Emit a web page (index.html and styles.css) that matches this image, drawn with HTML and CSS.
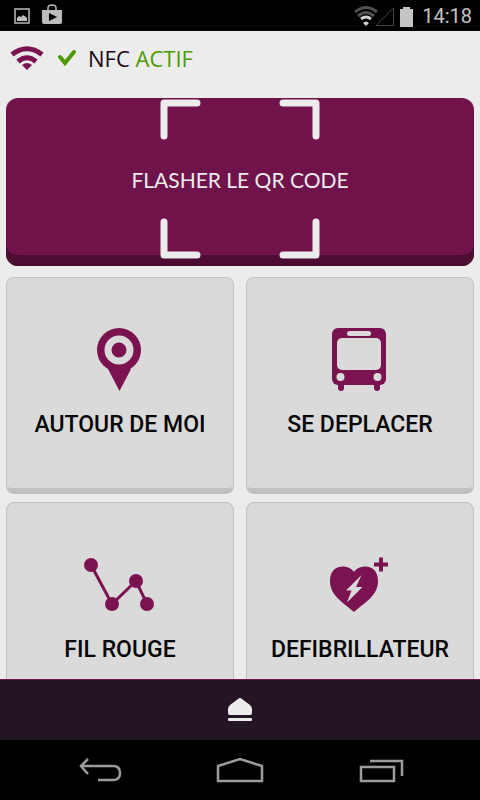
FILE: index.html
```html
<!DOCTYPE html>
<html lang="fr">
<head>
    <meta charset="UTF-8">
    <meta name="viewport" content="width=device-width, initial-scale=1.0">
    <title>NFC Actif</title>
    <link rel="stylesheet" href="styles.css">
</head>
<body>
    <div class="status-bar">
        <svg class="status-left" width="50" height="24" viewBox="0 0 50 24" aria-hidden="true">
            <rect x="1" y="5" width="14" height="14" fill="none" stroke="#bdbdbd" stroke-width="1.5"/>
            <path d="M3 17v-3l2-2 2 1 2-2 3 2 1 1v3z" fill="#bdbdbd"/>
            <path d="M28 6h20v12q0 2-2 2H30q-2 0-2-2z" fill="#bdbdbd"/>
            <path d="M34 6V4q0-3 4-3t4 3v2" fill="none" stroke="#bdbdbd" stroke-width="1.5"/>
            <path d="M35 9v8l8-4z" fill="#000"/>
        </svg>
        <div class="status-right">
            <svg width="60" height="24" viewBox="0 0 60 24" aria-hidden="true">
                <g fill="none" stroke="#505050" stroke-width="3">
                    <path d="M1 8Q12 -1 23 8"/>
                    <path d="M4 12Q12 5 20 12"/>
                </g>
                <path d="M7 15Q12 11 17 15" fill="none" stroke="#d0d0d0" stroke-width="3"/>
                <path d="M9 19q3-3 6 0l-3 3z" fill="#d0d0d0"/>
                <path d="M39.500 4v17.500H22z" fill="none" stroke="#444"/>
                <path d="M46 5h3V3h7v2h3v18H46z" fill="#c4c4c4"/>
            </svg>
            <span class="clock">14:18</span>
        </div>
    </div>

    <header class="nfc-header">
        <svg width="34" height="24" viewBox="0 0 34 24" aria-hidden="true">
            <g fill="none" stroke="#7a1350" stroke-width="5">
                <path d="M2 8.500Q17 -3 32 8.500"/>
                <path d="M8 15.500Q17 8 26 15.500"/>
            </g>
            <path d="M12 19q5-4 10 0l-5 5z" fill="#7a1350"/>
        </svg>
        <svg class="check" width="18" height="16" viewBox="0 0 18 16" aria-hidden="true">
            <path d="M2 7l5 6 9-11" fill="none" stroke="#4c9a00" stroke-width="4" stroke-linecap="round"/>
        </svg>
        <h1>NFC <span class="active">ACTIF</span></h1>
    </header>

    <main>
        <button class="qr-button" type="button">
            <svg class="qr-frame" width="160" height="160" viewBox="0 0 160 160" aria-hidden="true">
                <path d="M37 4H4V37M123 4H156V37M4 123V156H37M156 123V156H123" fill="none" stroke="#ececec" stroke-width="7" stroke-linecap="round" stroke-linejoin="round"/>
            </svg>
            <span class="qr-label">FLASHER LE QR CODE</span>
        </button>

        <div class="tiles">
            <button class="tile" type="button">
                <svg width="80" height="64" viewBox="0 0 80 64" aria-hidden="true">
                    <path d="M28 41L39.500 63 51 41z" fill="#7a1350"/>
                    <circle cx="39" cy="22" r="22" fill="#7a1350"/>
                    <circle cx="39" cy="22" r="11" fill="none" stroke="#dadada" stroke-width="7"/>
                </svg>
                <span>AUTOUR DE MOI</span>
            </button>
            <button class="tile" type="button">
                <svg width="80" height="64" viewBox="0 0 80 64" aria-hidden="true">
                    <g fill="#7a1350">
                        <rect x="12" y="0" width="54" height="57" rx="6"/>
                        <rect x="18" y="50" width="6" height="13" rx="3"/>
                        <rect x="54" y="50" width="6" height="13" rx="3"/>
                    </g>
                    <g fill="#dadada">
                        <rect x="27" y="3" width="24" height="5" rx="2.500"/>
                        <rect x="17" y="10" width="44" height="32" rx="5"/>
                        <circle cx="20.500" cy="49" r="4"/>
                        <circle cx="57.500" cy="49" r="4"/>
                    </g>
                </svg>
                <span>SE DEPLACER</span>
            </button>
            <button class="tile" type="button">
                <svg width="80" height="64" viewBox="0 0 80 64" aria-hidden="true">
                    <path d="M11 12L32 51 56 28 67 51" fill="none" stroke="#7a1350" stroke-width="3"/>
                    <g fill="#7a1350">
                        <circle cx="11" cy="12" r="7"/>
                        <circle cx="32" cy="51" r="7"/>
                        <circle cx="56" cy="28" r="7"/>
                        <circle cx="67" cy="51" r="7"/>
                    </g>
                </svg>
                <span>FIL ROUGE</span>
            </button>
            <button class="tile" type="button">
                <svg width="80" height="64" viewBox="0 0 80 64" aria-hidden="true">
                    <path d="M34 19C29 11 10 10 10 28C10 43 23 49 34 59C45 49 58 43 58 28C58 10 39 11 34 19z" fill="#7a1350"/>
                    <path d="M41.500 22L26 37.500h5.500L27 49.500 42.500 34H36z" fill="#dadada"/>
                    <path d="M61 4.500v14M54 11.500h14" stroke="#7a1350" stroke-width="4"/>
                </svg>
                <span>DEFIBRILLATEUR</span>
            </button>
        </div>
    </main>

    <footer>
        <button class="drawer" type="button" aria-label="Ouvrir le menu">
            <svg width="26" height="24" viewBox="0 0 26 24" aria-hidden="true">
                <path d="M13 0q1 0 2 1l8 6q2 2 2 4v4q0 2-2 2H3q-2 0-2-2v-4q0-2 2-4l8-6q1-1 2-1z" fill="#ececec"/>
                <rect x="1" y="20" width="24" height="3" rx="1" fill="#ececec"/>
            </svg>
        </button>
        <nav class="system-nav">
            <button type="button" aria-label="Retour">
                <svg width="48" height="26" viewBox="0 0 48 26" fill="none" stroke="#9c9c9c" stroke-width="2.500" aria-hidden="true">
                    <path d="M13 2L6 9l7 8M6 9h32q7 0 7 7t-7 7H23"/>
                </svg>
            </button>
            <button type="button" aria-label="Accueil">
                <svg width="48" height="26" viewBox="0 0 48 26" fill="none" stroke="#9c9c9c" stroke-width="2.500" aria-hidden="true">
                    <path d="M2 24V9l22-7 22 7v15z"/>
                </svg>
            </button>
            <button type="button" aria-label="Applications récentes">
                <svg width="48" height="26" viewBox="0 0 48 26" fill="none" stroke="#9c9c9c" stroke-width="2.500" aria-hidden="true">
                    <path d="M4 10h33v14H4zM13 4h32v15"/>
                </svg>
            </button>
        </nav>
    </footer>
</body>
</html>
```
FILE: styles.css
```css
/* Global styles */
:root {
    --plum: #70134a;
    --plum-dark: #4d0d33;
    --page: #ececec;
    --tile: #dadada;
    --tile-edge: #c1c1c1;
    --green: #4c9a00;
}

* {
    box-sizing: border-box;
}

body {
    display: flex;
    flex-direction: column;
    height: 100vh;
    margin: 0;
    background: var(--page);
    font-family: Roboto, sans-serif;
}

button {
    border: 0;
    padding: 0;
    background: none;
    font: inherit;
    cursor: pointer;
}

svg {
    display: block;
    flex: none;
}

/* Status bar */
.status-bar {
    display: flex;
    flex: none;
    justify-content: space-between;
    align-items: center;
    height: 31px;
    padding: 0 8px 0 14px;
    background: #000;
}

.status-right {
    display: flex;
    align-items: center;
    gap: 8px;
}

.clock {
    color: #c4c4c4;
    font-size: 20px;
    line-height: 30px;
}

/* Header */
.nfc-header {
    display: flex;
    flex: none;
    align-items: center;
    height: 54px;
    padding: 0 10px;
}

.check {
    margin: 0 12px 0 14px;
}

h1 {
    margin: 0;
    color: #1c0616;
    font-family: "Open Sans", sans-serif;
    font-size: 22px;
    font-weight: 400;
    line-height: 32px;
}

.active {
    color: var(--green);
}

/* Content */
main {
    flex: 1;
    min-height: 0;
    padding: 13px 6px 0;
    overflow: hidden;
}

.qr-button {
    display: grid;
    place-items: center;
    width: 100%;
    height: 168px;
    margin-bottom: 11px;
    border-radius: 12px;
    background: var(--plum);
    box-shadow: inset 0 -11px 0 var(--plum-dark);
    color: var(--page);
    font-family: Lato, sans-serif;
    font-size: 21px;
    line-height: 32px;
}

.qr-button > * {
    grid-area: 1 / 1;
}

.qr-frame {
    align-self: start;
    margin-top: 1px;
}

.qr-label {
    padding-bottom: 4px;
}

.tiles {
    display: grid;
    grid-template-columns: 1fr 1fr;
    gap: 8px 12px;
}

.tile {
    display: flex;
    flex-direction: column;
    align-items: center;
    gap: 17px;
    height: 217px;
    padding-top: 50px;
    border: 1px solid var(--tile-edge);
    border-bottom-width: 6px;
    border-radius: 8px;
    background: var(--tile);
    color: #050505;
    font-size: 23px;
    font-weight: 500;
    line-height: 32px;
}

/* Bottom bars */
footer {
    flex: none;
    background: #000;
}

.drawer {
    display: flex;
    justify-content: center;
    align-items: center;
    width: 100%;
    height: 61px;
    border-top: 1px solid var(--plum);
    background: #231524;
}

.system-nav {
    display: flex;
    justify-content: space-between;
    height: 60px;
    padding: 0 75px;
}
```
